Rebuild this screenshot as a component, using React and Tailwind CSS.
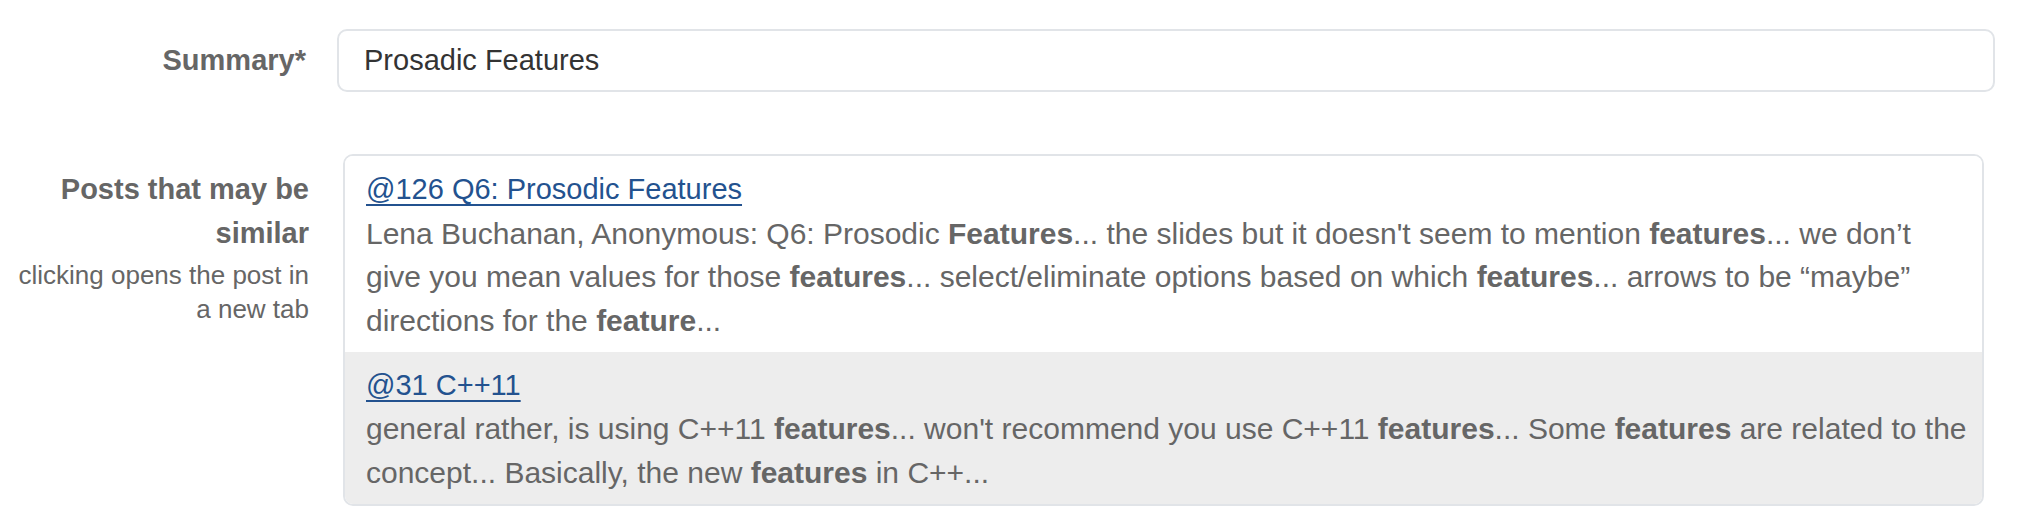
import React from 'react';

// each snippet is kept to the line breaks of the original list
const posts = [
    {
        id: 126,
        title: '@126 Q6: Prosodic Features',
        lines: [
            [
                ['Lena Buchanan, Anonymous: Q6: Prosodic ', false],
                ['Features', true],
                ["... the slides but it doesn't seem to mention ", false],
                ['features', true],
                ['... we don\u2019t', false],
            ],
            [
                ['give you mean values for those ', false],
                ['features', true],
                ['... select/eliminate options based on which ', false],
                ['features', true],
                ['... arrows to be \u201cmaybe\u201d', false],
            ],
            [
                ['directions for the ', false],
                ['feature', true],
                ['...', false],
            ],
        ],
    },
    {
        id: 31,
        title: '@31 C++11',
        lines: [
            [
                ['general rather, is using C++11 ', false],
                ['features', true],
                ["... won't recommend you use C++11 ", false],
                ['features', true],
                ['... Some ', false],
                ['features', true],
                [' are related to the', false],
            ],
            [
                ['concept... Basically, the new ', false],
                ['features', true],
                [' in C++...', false],
            ],
        ],
    },
];

const App = () => {
    return (
        <div className="min-h-screen bg-white pt-[29px] text-[#666] font-['Liberation_Sans',Arial,sans-serif]">
            {/* summary row */}
            <div className="flex items-center pr-[23px]">
                <label className="w-[309px] shrink-0 text-right text-[29px] font-bold pr-[3px]">
                    Summary*
                </label>
                <div className="ml-[28px] flex-1 h-[63px] flex items-center rounded-[10px] border-2 border-[#e1e4e8] bg-white px-[25px]">
                    <span className="text-[29px] text-[#333]">Prosadic Features</span>
                </div>
            </div>

            {/* similar posts row */}
            <div className="flex mt-[62px]">
                <div className="w-[309px] shrink-0 text-right pt-[13px]">
                    <div className="text-[29px] font-bold leading-[44px]">Posts that may be similar</div>
                    <div className="text-[26px] leading-[33.5px] mt-[4px]">clicking opens the post in a new tab</div>
                </div>
                <div className="ml-[34px] w-[1641px] rounded-[10px] border-2 border-[#e1e4e8] overflow-hidden">
                    {posts.map((post, i) => (
                        <div
                            key={post.id}
                            className={`px-[21px] pt-[12px] pb-[9px] text-[29px] leading-[43.5px] ${i % 2 === 1 ? 'bg-[#ededed]' : 'bg-white'}`}
                        >
                            <div>
                                <a href="#" className="text-[#23528f] underline underline-offset-[5px] decoration-[2px]">
                                    {post.title}
                                </a>
                            </div>
                            <div className="text-[30px] leading-[43.75px]">
                                {post.lines.map((line, k) => (
                                    <div key={k} className="whitespace-nowrap">
                                        {line.map(([text, bold], j) =>
                                            bold ? <b key={j} className="font-bold">{text}</b> : <span key={j}>{text}</span>
                                        )}
                                    </div>
                                ))}
                            </div>
                        </div>
                    ))}
                </div>
            </div>
        </div>
    );
};

export default App;
